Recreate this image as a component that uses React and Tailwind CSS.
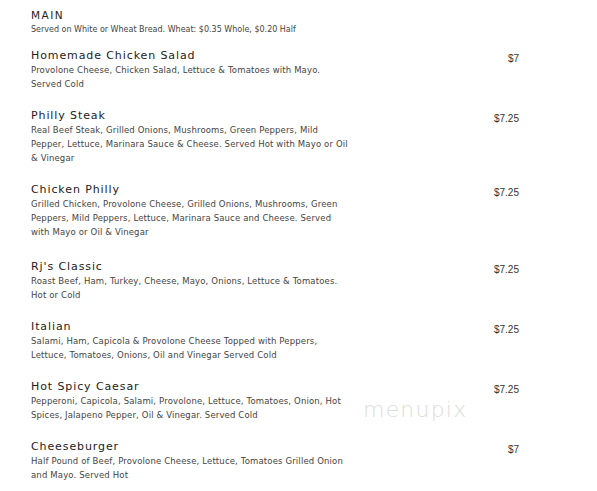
export default function App() {
  const items = [
    { t: "Homemade Chicken Salad", d: ["Provolone Cheese, Chicken Salad, Lettuce & Tomatoes with Mayo.", "Served Cold"], p: "$7" },
    { t: "Philly Steak", d: ["Real Beef Steak, Grilled Onions, Mushrooms, Green Peppers, Mild", "Pepper, Lettuce, Marinara Sauce & Cheese. Served Hot with Mayo or Oil", "& Vinegar"], p: "$7.25" },
    { t: "Chicken Philly", d: ["Grilled Chicken, Provolone Cheese, Grilled Onions, Mushrooms, Green", "Peppers, Mild Peppers, Lettuce, Marinara Sauce and Cheese. Served", "with Mayo or Oil & Vinegar"], p: "$7.25" },
    { t: "Rj's Classic", d: ["Roast Beef, Ham, Turkey, Cheese, Mayo, Onions, Lettuce & Tomatoes.", "Hot or Cold"], p: "$7.25", extra: true },
    { t: "Italian", d: ["Salami, Ham, Capicola & Provolone Cheese Topped with Peppers,", "Lettuce, Tomatoes, Onions, Oil and Vinegar Served Cold"], p: "$7.25" },
    { t: "Hot Spicy Caesar", d: ["Pepperoni, Capicola, Salami, Provolone, Lettuce, Tomatoes, Onion, Hot", "Spices, Jalapeno Pepper, Oil & Vinegar. Served Cold"], p: "$7.25" },
    { t: "Cheeseburger", d: ["Half Pound of Beef, Provolone Cheese, Lettuce, Tomatoes Grilled Onion", "and Mayo. Served Hot"], p: "$7" },
  ];
  return (
    <div className="relative w-[597px] h-[491px] overflow-hidden bg-white pl-[31px] pt-[8px]" style={{ fontFamily: '"DejaVu Sans", sans-serif' }}>
      <div className="text-[10.5px] leading-[15px] tracking-[1.5px] text-[#222]">MAIN</div>
      <div className="text-[8px] leading-[14px] text-[#444] whitespace-nowrap">Served on White or Wheat Bread. Wheat: $0.35 Whole, $0.20 Half</div>
      <div className="flex flex-col gap-[17px] mt-[11px]">
        {items.map((it) => (
          <div key={it.t} className={it.extra ? "flex mt-[3px]" : "flex"}>
            <div className="w-[320px]">
              <div className="text-[11px] leading-[15px] tracking-[0.9px] text-[#222]">{it.t}</div>
              {it.d.map((l) => (
                <div key={l} className="text-[8.5px] leading-[14px] tracking-[0.15px] text-[#444] whitespace-nowrap">{l}</div>
              ))}
            </div>
            <div className="w-[168px] text-right text-[10px] leading-[15px] text-[#333] pt-[3px]" style={{ fontFamily: '"Liberation Sans", sans-serif' }}>{it.p}</div>
          </div>
        ))}
      </div>
      <div className="absolute left-[363px] top-[393px] text-[22px] tracking-[1.2px] text-[#dcdcdc]" style={{ fontFamily: '"DejaVu Sans", sans-serif', fontWeight: 200 }}>menupix</div>
    </div>
  );
}
